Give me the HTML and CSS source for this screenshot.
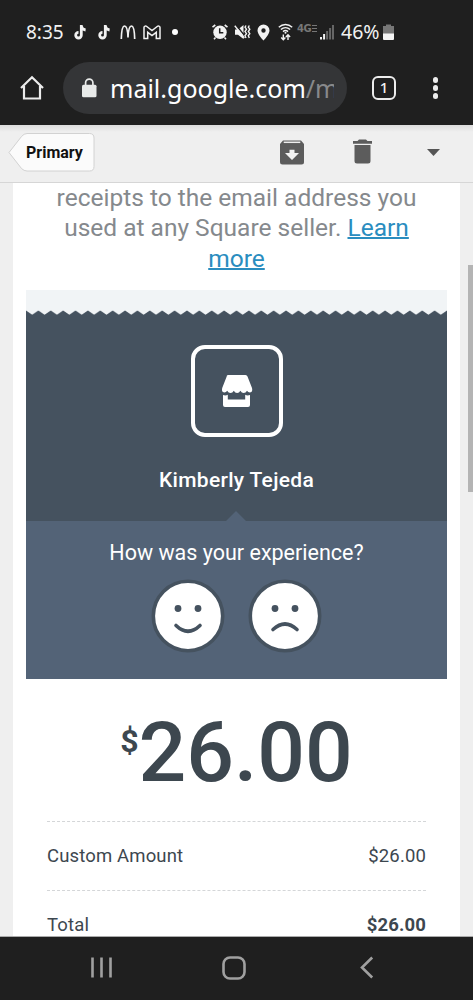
FILE: index.html
```html
<!doctype html>
<html lang="en">
  <head>
    <meta charset="UTF-8" />
    <meta name="viewport" content="width=device-width, initial-scale=1.0" />
    <title>Receipt from Kimberly Tejeda</title>
    <link rel="stylesheet" href="styles.css">
  </head>
  <body>
    <div class="phone">
      <header class="browser">
        <div class="status-bar">
          <div class="status-left">
            <span class="clock">8:35</span>
            <svg class="icon-tiktok" width="13" height="15" viewBox="0 0 13 15"><path d="M7.3 0v10.2a2.8 2.8 0 1 1-2.8-2.8M7.3 1c.5 2.5 2 3.7 4.3 4" /></svg>
            <svg class="icon-tiktok" width="13" height="15" viewBox="0 0 13 15"><path d="M7.3 0v10.2a2.8 2.8 0 1 1-2.8-2.8M7.3 1c.5 2.5 2 3.7 4.3 4" /></svg>
            <svg class="icon-arches" width="16" height="15" viewBox="0 0 16 15"><path d="M1.3 14C1.5 6 2.5 1 4.5 1S7.800 6 8 12.500C8.200 6 9.500 1 11.500 1s3 5 3.200 13" /></svg>
            <svg class="icon-gmail" width="18" height="15" viewBox="0 0 18 15"><path d="M1 13.500V2.600C1 1 2.800.7 3.800 1.500L9 5.600l5.200-4.100C15.200.7 17 1 17 2.600v10.900h-3.700V7.300L9 10.600 4.700 7.300v6.200z" /></svg>
            <span class="dot"></span>
          </div>
          <div class="status-right">
            <svg width="18" height="18" viewBox="0 0 18 18">
              <circle cx="9" cy="9.300" r="6.700" fill="#f2f2f2" />
              <path d="M1.500 4.200 4.300 2M16.500 4.200 13.700 2M4.500 14.500 3 16.200M13.500 14.500l1.500 1.700" stroke="#f2f2f2" stroke-width="1.600" fill="none" />
              <path d="M8.700 5.300v4.500h3.600" stroke="#1f1f1f" stroke-width="1.500" fill="none" />
            </svg>
            <svg class="icon-mute" width="17" height="18" viewBox="0 0 17 18">
              <path d="M1 6.500h3L9.500 2v14L4 11.700H1z" fill="#f2f2f2" />
              <path d="M1.500 1.500 11 13" stroke="#1f1f1f" stroke-width="1.400" />
              <path d="M.8 2.800 10.300 15" stroke="#f2f2f2" stroke-width="1.400" />
              <path d="M12 2.500l-1 1.700 1.500 2-1.500 2.300 1.500 2.200-1.500 2 1 2.300M15.300 2.500l-1 1.700 1.500 2-1.500 2.300 1.500 2.200-1.500 2 1 2.300" stroke="#f2f2f2" stroke-width="1.400" fill="none" />
            </svg>
            <svg class="icon-pin" width="13" height="17" viewBox="0 0 13 17"><path fill="#f2f2f2" fill-rule="evenodd" d="M6.500.5a6 6 0 0 0-6 6c0 4 6 10 6 10s6-6 6-10a6 6 0 0 0-6-6zm0 3.800a2.200 2.200 0 1 1 0 4.400 2.200 2.200 0 0 1 0-4.400z" /></svg>
            <svg class="icon-wifi" width="15" height="18" viewBox="0 0 15 18">
              <g stroke="#f2f2f2" stroke-width="1.500" fill="none">
                <path d="M.8 4.200c4-3.600 9.400-3.600 13.400 0M2.900 6.500c2.700-2.500 6.500-2.500 9.200 0M5 8.600c1.500-1.300 3.500-1.300 5 0" />
                <path d="M5.300 11.500v5M3.200 14.500l2.100 2.200 2.100-2.200M10 17v-5M7.900 14 10 11.800l2.100 2.200" stroke-width="1.400" />
              </g>
              <circle cx="7.500" cy="9.800" r="1" fill="#f2f2f2" />
            </svg>
            <span class="network">4G<i class="lte"></i></span>
            <svg class="icon-signal" width="15" height="16" viewBox="0 0 15 16">
              <path d="M0 13h2v2.500H0zM3.100 10h2v5.500h-2z" fill="#f2f2f2" />
              <path d="M6.100 7h2v8.500h-2zM9.100 4h2v11.500h-2zM12 1h2v14.500h-2z" fill="#666" />
            </svg>
            <span class="percent">46%</span>
            <svg class="icon-battery" width="11" height="17" viewBox="0 0 11 17">
              <path d="M3 .5h5V2h3v8H0V2h3z" fill="#777" />
              <path d="M0 9.500h11V15a1 1 0 0 1-1 1H1a1 1 0 0 1-1-1z" fill="#f5f5f5" />
            </svg>
          </div>
        </div>

        <div class="address-row">
          <svg class="icon-home" width="26" height="26" viewBox="0 0 26 26"><path d="M2 13 13 2.200 24 13M5 11v12.500h16V11" /></svg>
          <div class="address">
            <svg class="icon-lock" width="15" height="20" viewBox="0 0 15 20">
              <rect x="0" y="6.800" width="14.500" height="12.500" rx="1.500" fill="#e8eae9" />
              <path d="M3.600 7.500V4.800a3.650 3.650 0 0 1 7.300 0v2.700" stroke="#e8eae9" stroke-width="1.700" fill="none" />
            </svg>
            <div class="url">mail.google.com<span class="url-path">/m</span></div>
          </div>
          <span class="tab-count">1</span>
          <span class="menu-dots"><i></i><i></i><i></i></span>
        </div>
      </header>

      <div class="mail-toolbar">
        <div class="back-button">
          <svg class="back-shape" width="88" height="41" viewBox="0 0 88 41"><path d="M1 20.500 13.500 4.500Q16 1.500 19 1.500H81.500Q86 1.500 86 6V34.500Q86 39 81.500 39H19Q16 39 13.500 36.500Z" /></svg>
          <span class="back-label">Primary</span>
        </div>
        <svg class="icon-archive" width="24" height="25" viewBox="0 0 24 25">
          <path d="M3 .5h18l3 3.600V22a2.500 2.500 0 0 1-2.500 2.500h-19A2.500 2.500 0 0 1 0 22V4.100z" fill="#5c5c5c" />
          <path d="M3.700 2.300h16.600" stroke="#eee" stroke-width="1.500" />
          <path d="M9.500 9.800h5v3.200h4.500L12 20l-7-7h4.500z" fill="#f3f3f3" />
        </svg>
        <svg class="icon-trash" width="19" height="25" viewBox="0 0 19 25">
          <path d="M0 2h4.500L6 .5h7L14.500 2H19v2.800H0zM1.500 6h16v16a2.500 2.500 0 0 1-2.500 2.500H4A2.500 2.500 0 0 1 1.500 22z" fill="#5c5c5c" />
        </svg>
        <svg class="icon-caret" width="13" height="7" viewBox="0 0 13 7"><path d="M0 0h13L6.500 7z" fill="#555" /></svg>
      </div>

      <main class="viewport">
        <div class="message">
          <p class="notice">
            <span class="line">receipts to the email address you</span>
            <span class="line">used at any Square seller. <a class="link" href="#">Learn</a></span>
            <span class="line"><a class="link" href="#">more</a></span>
          </p>

          <section class="receipt">
            <svg class="torn-edge" width="421" height="25" viewBox="0 0 420 25" preserveAspectRatio="none">
              <defs>
                <pattern id="teeth" width="12.353" height="5" patternUnits="userSpaceOnUse" y="20">
                  <path d="M0 .5 6.176 4.700 12.353.5V5H0z" fill="#45525f" />
                </pattern>
              </defs>
              <rect y="20" width="420" height="5" fill="url(#teeth)" />
            </svg>
            <div class="merchant">
              <div class="merchant-logo">
                <svg width="34" height="34" viewBox="0 0 34 34">
                  <path d="M8 1h17.500q1.500 0 2 1.500l4.500 11.500q1 4-2 4.500-2 0-3-1.800-1.200 2.300-3.300 2.300t-3.300-2.300q-1.200 2.300-3.300 2.300t-3.300-2.300q-1.200 2.300-3.300 2.300t-3.300-2.300q-1 1.800-3 1.800-3-.5-2-4.500l4.500-11.500Q6.500 1 8 1z" />
                  <path d="M3 21q2.500 1 4.800-.2v4.700h17.400v-4.700q2.300 1.200 4.800.2v10q0 2-2 2H5q-2 0-2-2z" />
                </svg>
              </div>
              <div class="merchant-name">Kimberly Tejeda</div>
            </div>
            <div class="feedback">
              <span class="notch"></span>
              <div class="question">How was your experience?</div>
              <div class="faces">
                <svg class="face" width="74" height="74" viewBox="0 0 74 74">
                  <circle class="face-bg" cx="37" cy="37" r="34.700" />
                  <circle class="eye" cx="27" cy="29.500" r="3.400" /><circle class="eye" cx="47" cy="29.500" r="3.400" />
                  <path class="mouth" d="M25 46.500q12 11.500 24 0" />
                </svg>
                <svg class="face" width="74" height="74" viewBox="0 0 74 74">
                  <circle class="face-bg" cx="37" cy="37" r="34.700" />
                  <circle class="eye" cx="27" cy="29.500" r="3.400" /><circle class="eye" cx="47" cy="29.500" r="3.400" />
                  <path class="mouth" d="M25 50.500q12-11 24 0" />
                </svg>
              </div>
            </div>
          </section>

          <div class="amount"><span class="currency">$</span>26.00</div>

          <div class="row"><span>Custom Amount</span><span>$26.00</span></div>
          <div class="row"><span>Total</span><strong>$26.00</strong></div>
        </div>
        <div class="scrollbar"></div>
      </main>

      <nav class="nav-bar">
        <svg width="22" height="23" viewBox="0 0 22 23"><path d="M1.500 1.500v20M10.500 1.500v20M19.500 1.500v20" /></svg>
        <svg class="nav-home" width="24" height="24" viewBox="0 0 24 24"><rect x="1.500" y="1.500" width="21" height="21" rx="6.500" /></svg>
        <svg class="nav-back" width="14" height="23" viewBox="0 0 14 23"><path d="M12.200 1.500 2 11.500l10.200 10" /></svg>
      </nav>
    </div>
  </body>
</html>
```

FILE: styles.css
```css
* {
  box-sizing: border-box;
}

body {
  margin: 0;
  font-family: Roboto, sans-serif;
}

svg {
  display: block;
  flex: none;
}

.phone {
  display: flex;
  flex-direction: column;
  width: 473px;
  height: 1000px;
  overflow: hidden;
  background: #efefef;
}

/* Browser chrome */
.browser {
  height: 125px;
  background: #1f1f1f;
  color: #f2f2f2;
  font-family: 'Noto Sans', sans-serif;
}

.status-bar {
  display: flex;
  justify-content: space-between;
  height: 62px;
  padding: 2px 79px 0 26px;
}

.status-left,
.status-right {
  display: flex;
  align-items: center;
}

.clock {
  width: 48px;
  margin-top: -1px;
  font-size: 19px;
}

.icon-tiktok {
  margin-right: 11px;
  fill: none;
  stroke: #f2f2f2;
  stroke-width: 2.8;
}

.icon-arches {
  margin-left: -2px;
  fill: none;
  stroke: #f2f2f2;
  stroke-width: 1.7;
}

.icon-gmail {
  margin-left: 7px;
  fill: none;
  stroke: #f2f2f2;
  stroke-width: 1.5;
}

.dot {
  width: 6px;
  height: 6px;
  margin-left: 11px;
  border-radius: 50%;
  background: #fff;
}

.icon-mute {
  margin-left: 5px;
}

.icon-pin {
  margin-left: 6px;
}

.icon-wifi {
  margin-left: 8px;
}

.network {
  display: flex;
  align-items: center;
  width: 21px;
  height: 9px;
  margin: -8px 0 0 4px;
  color: #777;
  font: bold 10px/9px 'DejaVu Sans', sans-serif;
  letter-spacing: -0.5px;
}

.lte {
  width: 5px;
  height: 7px;
  margin-left: 1px;
  background: repeating-linear-gradient(#777 0 1px, transparent 1px 3px);
}

.icon-signal {
  margin-left: 2px;
}

.percent {
  width: 43px;
  margin: -1px 0 0 6px;
  font-size: 19.5px;
}

.icon-battery {
  margin-left: -1px;
}

.address-row {
  display: flex;
  align-items: center;
  height: 52px;
  padding-left: 19px;
}

.icon-home {
  fill: none;
  stroke: #ececec;
  stroke-width: 2.2;
}

.address {
  display: flex;
  align-items: center;
  width: 284px;
  height: 52px;
  margin-left: 18px;
  padding-left: 19px;
  border-radius: 26px;
  background: #343537;
}

.url {
  width: 224px;
  margin-left: 13px;
  overflow: hidden;
  color: #fff;
  font-size: 25px;
  white-space: nowrap;
}

.url-path {
  color: #88898b;
}

.tab-count {
  width: 24px;
  height: 24px;
  margin-left: 25px;
  border: 2px solid #ececec;
  border-radius: 6px;
  font-size: 15px;
  font-weight: 500;
  line-height: 19px;
  text-align: center;
}

.menu-dots {
  display: flex;
  flex-direction: column;
  gap: 2.5px;
  margin-left: 37px;
}

.menu-dots i {
  width: 5.4px;
  height: 5.4px;
  border-radius: 50%;
  background: #ececec;
}

/* Mail toolbar */
.mail-toolbar {
  display: flex;
  align-items: center;
  height: 58px;
  padding: 0 0 3px 8px;
  border-bottom: 1px solid #d6d6d6;
  background: linear-gradient(#dcdcdc, #efefef 7px);
}

.back-button {
  position: relative;
  width: 88px;
  height: 41px;
}

.back-shape path {
  fill: #fbfbfb;
  stroke: #d2d2d2;
}

.back-label {
  position: absolute;
  top: 0;
  left: 18px;
  color: #111;
  font-size: 16px;
  font-weight: bold;
  line-height: 41px;
}

.icon-archive {
  margin-left: 184px;
}

.icon-trash {
  margin: -2px 0 0 49px;
}

.icon-caret {
  margin-left: 55px;
}

/* Message */
.viewport {
  position: relative;
  height: 754px;
  padding: 0 13px;
  overflow: hidden;
  border-bottom: 1px solid #aaa;
}

.message {
  height: 100%;
  padding: 0 13px;
  background: #fff;
}

.notice {
  margin: 0;
  height: 107px;
  color: #85898d;
  font-size: 24.5px;
  line-height: 30.3px;
  text-align: center;
}

.line {
  display: block;
  white-space: nowrap;
}

.link {
  color: #2a8dbf;
  text-decoration: underline;
  text-decoration-thickness: 1.5px;
}

.torn-edge {
  background: #f1f4f6;
}

.merchant {
  display: flex;
  flex-direction: column;
  align-items: center;
  height: 206px;
  padding-top: 30px;
  background: #45525f;
}

.merchant-logo {
  display: flex;
  align-items: center;
  justify-content: center;
  width: 92px;
  height: 92px;
  border: 4px solid #fff;
  border-radius: 14px;
}

.merchant-logo svg {
  fill: #fff;
}

.merchant-name {
  margin-top: 31px;
  color: #fff;
  font-size: 21px;
  font-weight: 500;
  line-height: 24px;
  letter-spacing: 0.3px;
}

.feedback {
  position: relative;
  height: 158px;
  padding-top: 19px;
  background: #536377;
}

.notch {
  position: absolute;
  top: -10px;
  left: 200px;
  border: solid transparent;
  border-width: 0 10px 10px;
  border-bottom-color: #536377;
}

.question {
  color: #fff;
  font-size: 21.5px;
  line-height: 26px;
  text-align: center;
}

.faces {
  display: flex;
  justify-content: center;
  gap: 23px;
  margin-top: 13px;
}

.face-bg {
  fill: #fff;
  stroke: #45525f;
  stroke-width: 3.6;
}

.eye {
  fill: #45525f;
}

.mouth {
  fill: none;
  stroke: #45525f;
  stroke-width: 3.6;
  stroke-linecap: round;
}

.amount {
  display: flex;
  justify-content: center;
  height: 142px;
  padding-top: 25px;
  color: #3d474f;
  font-size: 84px;
  font-weight: 500;
  line-height: 98px;
}

.currency {
  font-size: 32px;
  font-weight: bold;
  line-height: 74px;
}

.row {
  display: flex;
  justify-content: space-between;
  height: 68.5px;
  margin: 0 21px;
  border-top: 1px dashed #d4d6d8;
  color: #3d474f;
  font-size: 18.5px;
  line-height: 68px;
  letter-spacing: 0.15px;
}

.scrollbar {
  position: absolute;
  top: 82px;
  right: 0;
  width: 5px;
  height: 227px;
  background: #b4b4b4;
}

/* Android navigation */
.nav-bar {
  display: flex;
  align-items: center;
  height: 63px;
  padding: 0 0 2px 91px;
  background: #1f1f1f;
  fill: none;
  stroke: #a0a0a0;
  stroke-width: 2.6;
}

.nav-home {
  margin-left: 109px;
}

.nav-back {
  margin-left: 114px;
}
```
